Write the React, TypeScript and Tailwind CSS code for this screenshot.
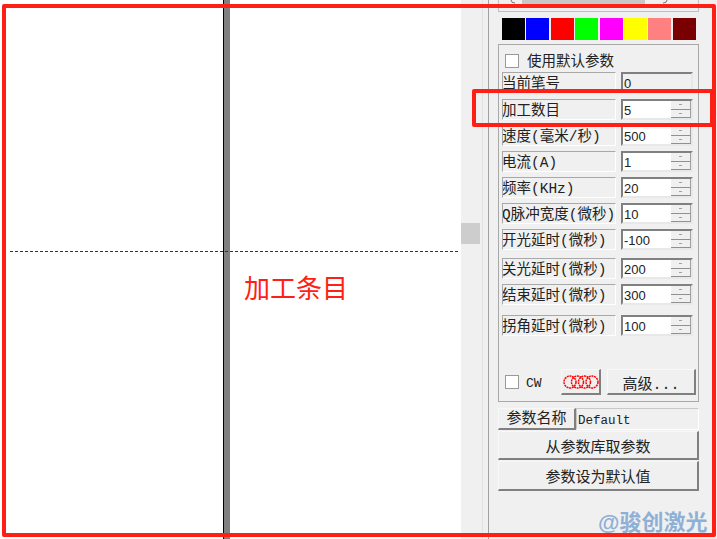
const swatches = [
  "bg-[#000000]",
  "bg-[#0000ff]",
  "bg-[#ff0000]",
  "bg-[#00ff00]",
  "bg-[#ff00ff]",
  "bg-[#ffff00]",
  "bg-[#ff8080]",
  "bg-[#7a0000]",
];

const params = [
  { label: "加工数目", value: "5", top: "mt-[6px]" },
  { label: "速度(毫米/秒)", value: "500", top: "mt-[5px]" },
  { label: "电流(A)", value: "1", top: "mt-[5px]" },
  { label: "频率(KHz)", value: "20", top: "mt-[5px]" },
  { label: "Q脉冲宽度(微秒)", value: "10", top: "mt-[5px]" },
  { label: "开光延时(微秒)", value: "-100", top: "mt-[5px]" },
  { label: "关光延时(微秒)", value: "200", top: "mt-[8px]" },
  { label: "结束延时(微秒)", value: "300", top: "mt-[5px]" },
  { label: "拐角延时(微秒)", value: "100", top: "mt-[10px]" },
];

const btn =
  "flex items-center justify-center bg-[#f0f0f0] border border-t-[#f8f8f8] border-l-[#f8f8f8] border-r-[#808080] border-b-[#808080] border-r-2 border-b-2 text-[15px] leading-none text-[#222]";

const Label = ({ text }: { text: string }) => (
  <div className="h-[21px] w-[114px] shrink-0 overflow-hidden whitespace-nowrap border border-t-[#a8a8a8] border-l-[#a8a8a8] border-r-white border-b-white indent-[-1px] text-[14.5px] leading-[23px] text-[#222]">
    {text}
  </div>
);

const SpinPart = () => (
  <div className="flex flex-1 items-center justify-center border-b border-r border-b-[#909090] border-r-[#a0a0a0] bg-[#f0f0f0]">
    <div className="h-[1px] w-[3px] bg-[#a0a0a0]" />
  </div>
);

const Spin = ({ value }: { value: string }) => (
  <div className="ml-[5px] flex h-[21px] w-[72px] border-2 border-t-[#808080] border-l-[#808080] border-r-[#e8e8e8] border-b-[#e8e8e8] bg-white">
    <span className="flex-1 pl-[1px] text-[13px] leading-[19px] text-[#222] font-['Liberation_Sans',sans-serif]">
      {value}
    </span>
    <div className="flex w-[20px] flex-col">
      <SpinPart />
      <SpinPart />
    </div>
  </div>
);

const Check = () => (
  <div className="h-[14px] w-[14px] shrink-0 border border-[#9a9a9a] bg-white" />
);

export default function App() {
  return (
    <div className="relative flex h-[539px] w-[717px] overflow-hidden bg-[#f0f0f0] font-['Liberation_Mono','Noto_Sans_CJK_SC',monospace]">
      {/* canvas */}
      <div className="relative h-full w-[461px] shrink-0 bg-white">
        <div className="absolute left-[223px] top-0 h-full w-[2px] bg-black" />
        <div className="absolute left-[224px] top-0 h-full w-[6px] bg-[#808080]" />
        <div className="absolute left-[10px] top-[251px] w-[448px] border-t border-dashed border-[#333]" />
      </div>

      {/* scroll strip */}
      <div className="flex h-full w-[22px] shrink-0 items-center border-r border-[#e2e2e2]">
        <div className="mb-[72px] h-[21px] w-[19px] bg-[#cdcdcd]" />
      </div>
      <div className="h-full w-[6px] shrink-0 border-r border-[#a0a0a0]" />

      {/* side panel */}
      <div className="ml-[9px] flex w-[201px] flex-col">
        <div className="flex h-[12px] border-x border-b border-[#c0c0c0] pl-[23px]">
          <div className="h-[5px] w-[123px] bg-[#c8c8c8]" />
          <svg className="absolute left-[508px] top-0" width="162" height="4" viewBox="0 0 162 4" fill="none" stroke="#777" strokeWidth="1">
            <path d="M3 0 Q3 3 7 3" />
            <path d="M159 0 Q159 3 155 3" />
          </svg>
        </div>

        <div className="ml-[4px] mt-[6px] flex h-[22px] gap-[1.4px]">
          {swatches.map((c) => (
            <div key={c} className={`h-[22px] w-[23px] ${c}`} />
          ))}
        </div>

        <div className="mt-[4px] flex h-[358px] flex-col border border-[#a8a8a8] pl-[3px]">
          <div className="mt-[8px] flex h-[16px] items-center pl-[3px]">
            <Check />
            <span className="ml-[8px] mt-[2px] text-[14.5px] leading-none text-[#222]">使用默认参数</span>
          </div>

          <div className="mt-[3px] flex">
            <Label text="当前笔号" />
            <div className="ml-[5px] h-[21px] w-[72px] border-2 border-t-[#808080] border-l-[#808080] border-r-[#e8e8e8] border-b-[#e8e8e8] pl-[1px] text-[13px] leading-[20px] text-[#222] font-['Liberation_Sans',sans-serif]">
              0
            </div>
          </div>

          {params.map((p) => (
            <div key={p.label} className={`flex ${p.top}`}>
              <Label text={p.label} />
              <Spin value={p.value} />
            </div>
          ))}

          <div className="mt-[33px] flex h-[26px] items-center pl-[3px]">
            <Check />
            <span className="ml-[7px] mt-[3px] w-[35px] text-[13px] leading-none text-[#222]">CW</span>
            <button className={`${btn} h-[26px] w-[40px]`}>
              <svg width="36" height="14" viewBox="0 0 36 14" fill="none" stroke="#ff0000" strokeWidth="1.5" strokeDasharray="2 0.7">
                <circle cx="7" cy="7" r="6" />
                <circle cx="14.5" cy="7" r="6" />
                <circle cx="21.5" cy="7" r="6" />
                <circle cx="29" cy="7" r="6" />
              </svg>
            </button>
            <button className={`${btn} ml-[6px] h-[26px] w-[89px] pt-[7px]`}>高级...</button>
          </div>
        </div>

        <div className="mt-[6px] flex h-[22px]">
          <button className={`${btn} h-[22px] w-[78px] pt-[2px]`}>参数名称</button>
          <div className="flex-1 border border-t-[#c8c8c8] border-l-[#c8c8c8] border-r-white border-b-white pl-[1px] text-[12.5px] leading-[24px] text-[#222]">
            Default
          </div>
        </div>
        <button className={`${btn} mt-[1px] h-[29px] w-full pt-[6px]`}>从参数库取参数</button>
        <button className={`${btn} mt-[1px] h-[30px] w-full pt-[6px]`}>参数设为默认值</button>
      </div>

      {/* red annotations */}
      <div className="pointer-events-none absolute left-[2px] top-[4px] h-[533px] w-[714px] rounded-[2px] border-[4px] border-[#ff2015]" />
      <div className="pointer-events-none absolute left-[472px] top-[89px] h-[38px] w-[242px] rounded-[2px] border-[4px] border-[#ff2015]" />
      <div className="absolute left-[244px] top-[273px] text-[26px] leading-[36px] text-[#ff2015]">加工条目</div>
      <div className="absolute left-[598px] top-[508px] font-['Liberation_Sans','Noto_Sans_CJK_SC',sans-serif] text-[22px] font-bold leading-[30px] text-[#8fb0d6]">@骏创激光</div>
    </div>
  );
}
